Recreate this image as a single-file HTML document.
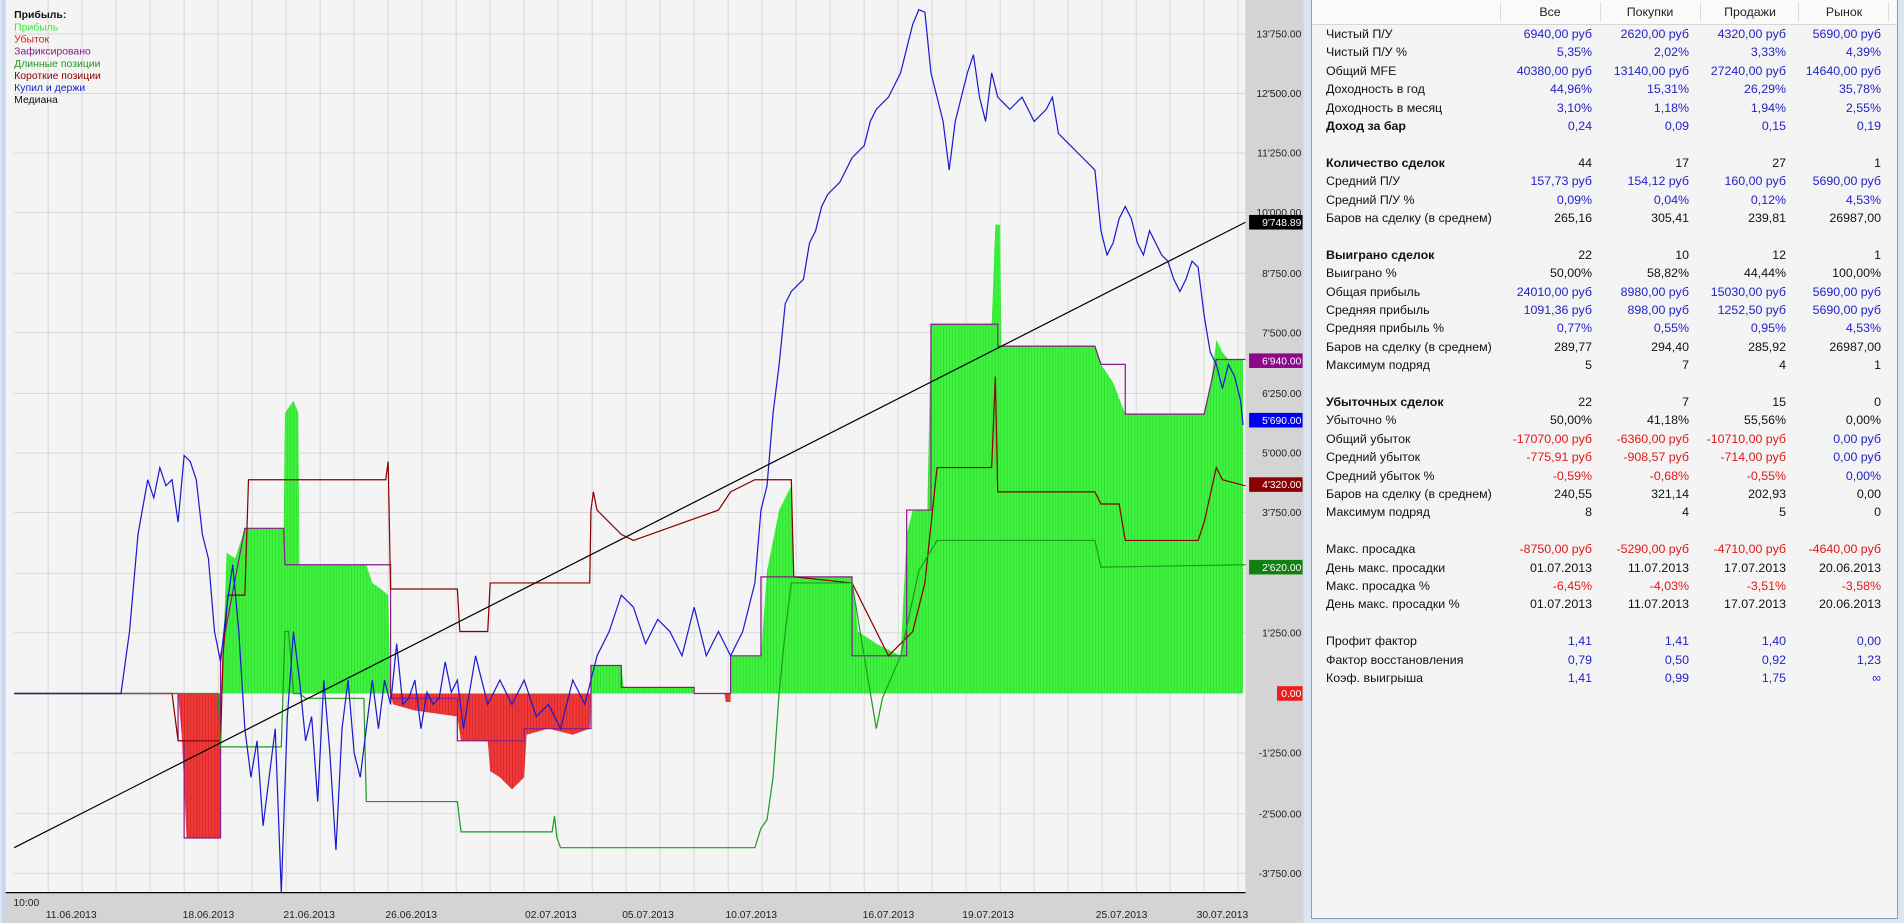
<!DOCTYPE html>
<html><head><meta charset="utf-8">
<style>
html,body{margin:0;padding:0;width:1904px;height:923px;overflow:hidden;background:#dbe6f4;font-family:"Liberation Sans","DejaVu Sans",sans-serif;}
#chart{position:absolute;left:2px;top:0;width:1302px;height:923px;}
#panel{position:absolute;left:1311px;top:0;width:585px;height:918px;background:#f4f4f4;border:1px solid #8c9cb4;border-top:none;font-size:12.4px;color:#111;}
.hdr{position:absolute;left:0;top:0;width:585px;height:24px;background:#fafafa;border-bottom:1px solid #d6d6d6;}
.hdr span{position:absolute;top:5px;width:100px;text-align:center;color:#222;}
.hdr i{position:absolute;top:2px;width:1px;height:20px;background:#dcdcdc;}
.r{position:absolute;left:0;width:585px;height:18px;line-height:18px;}
.r b,.r span{position:absolute;}
.r .l{left:14px;font-weight:normal;}
.r .bl{left:14px;font-weight:bold;}
.c1,.c2,.c3,.c4{text-align:right;width:140px;}
.c1{left:140px}.c2{left:237px}.c3{left:334px}.c4{left:429px}
.b{color:#2222c8}.d{color:#e01818}
</style></head><body>
<svg id="chart" viewBox="0 0 1072.2 760" preserveAspectRatio="none" xmlns="http://www.w3.org/2000/svg">
<defs>
<pattern id="gp" width="2.5" height="10" patternUnits="userSpaceOnUse"><rect width="2.5" height="10" fill="#3ff23f"/><rect width="0.5" height="10" fill="#2bd62b"/></pattern>
<pattern id="rp" width="2.5" height="10" patternUnits="userSpaceOnUse"><rect width="2.5" height="10" fill="#f03a3a"/><rect width="0.5" height="10" fill="#c81e1e"/></pattern>
</defs>
<rect x="0" y="0" width="1072" height="760" fill="#f4f4f4"/>
<rect x="0" y="0" width="3" height="760" fill="#c8d6ea"/>
<rect x="1024" y="0" width="48" height="735" fill="#d4d4d4"/>
<rect x="3" y="735" width="1069" height="25" fill="#d4d4d4"/>
<g stroke="#d8d8d8" stroke-width="0.8">
<line x1="10" x2="1024" y1="28" y2="28"/><line x1="10" x2="1024" y1="77" y2="77"/><line x1="10" x2="1024" y1="126" y2="126"/><line x1="10" x2="1024" y1="175" y2="175"/><line x1="10" x2="1024" y1="225" y2="225"/><line x1="10" x2="1024" y1="274" y2="274"/><line x1="10" x2="1024" y1="324" y2="324"/><line x1="10" x2="1024" y1="373" y2="373"/><line x1="10" x2="1024" y1="422" y2="422"/><line x1="10" x2="1024" y1="472" y2="472"/><line x1="10" x2="1024" y1="521" y2="521"/><line x1="10" x2="1024" y1="620" y2="620"/><line x1="10" x2="1024" y1="670" y2="670"/><line x1="10" x2="1024" y1="719" y2="719"/>
<line x1="38" x2="38" y1="0" y2="735"/><line x1="66" x2="66" y1="0" y2="735"/><line x1="94" x2="94" y1="0" y2="735"/><line x1="122" x2="122" y1="0" y2="735"/><line x1="150" x2="150" y1="0" y2="735"/><line x1="178" x2="178" y1="0" y2="735"/><line x1="206" x2="206" y1="0" y2="735"/><line x1="234" x2="234" y1="0" y2="735"/><line x1="262" x2="262" y1="0" y2="735"/><line x1="290" x2="290" y1="0" y2="735"/><line x1="318" x2="318" y1="0" y2="735"/><line x1="346" x2="346" y1="0" y2="735"/><line x1="374" x2="374" y1="0" y2="735"/><line x1="402" x2="402" y1="0" y2="735"/><line x1="430" x2="430" y1="0" y2="735"/><line x1="458" x2="458" y1="0" y2="735"/><line x1="486" x2="486" y1="0" y2="735"/><line x1="514" x2="514" y1="0" y2="735"/><line x1="542" x2="542" y1="0" y2="735"/><line x1="570" x2="570" y1="0" y2="735"/><line x1="598" x2="598" y1="0" y2="735"/><line x1="626" x2="626" y1="0" y2="735"/><line x1="654" x2="654" y1="0" y2="735"/><line x1="682" x2="682" y1="0" y2="735"/><line x1="710" x2="710" y1="0" y2="735"/><line x1="738" x2="738" y1="0" y2="735"/><line x1="766" x2="766" y1="0" y2="735"/><line x1="794" x2="794" y1="0" y2="735"/><line x1="822" x2="822" y1="0" y2="735"/><line x1="850" x2="850" y1="0" y2="735"/><line x1="878" x2="878" y1="0" y2="735"/><line x1="906" x2="906" y1="0" y2="735"/><line x1="934" x2="934" y1="0" y2="735"/><line x1="962" x2="962" y1="0" y2="735"/><line x1="990" x2="990" y1="0" y2="735"/><line x1="1018" x2="1018" y1="0" y2="735"/>
</g>
<path fill="url(#gp)" d="M180,571 L182,540 L185,455 L192,460 L200,435 L232,435 L233,340 L240,330 L244,340 L245,465 L300,465 L305,480 L312,485 L318,490 L320,571 Z
M485,571 L485,548 L510,548 L512,566 L570,566 L570,571 Z
M600,571 L600,540 L625,540 L630,470 L640,420 L650,400 L652,475 L700,475 L705,520 L720,530 L740,540 L745,440 L750,420 L762,420 L765,267 L815,267 L818,185 L822,185 L823,285 L900,285 L905,300 L915,315 L925,341 L990,341 L995,320 L1000,280 L1005,290 L1010,296 L1022,296 L1022,571 Z"/>
<path fill="url(#rp)" d="M145,571 L148,605 L152,690 L180,690 L180,571 Z
M320,571 L322,580 L340,585 L375,590 L378,610 L400,610 L402,635 L410,640 L420,650 L430,640 L432,605 L450,600 L470,605 L484,600 L485,571 Z
M595,571 L596,578 L600,578 L600,571 Z"/>
<polyline fill="none" stroke="#8a1a8a" stroke-width="1" points="10,571 145,571 145,610 150,610 150,690 180,690 180,540 200,435 232,435 233,465 320,465 320,575 375,575 375,610 430,610 430,600 485,600 485,548 510,548 510,566 570,566 570,571 600,571 600,540 625,540 625,475 700,475 700,540 745,540 745,420 765,420 765,267 820,267 820,285 900,285 905,300 925,300 925,341 990,341 1000,296 1024,296"/>
<polyline fill="none" stroke="#8b0000" stroke-width="1" points="10,571 140,571 145,610 180,610 182,540 186,490 200,490 203,395 316,395 318,380 320,485 375,485 377,520 400,520 402,480 430,480 432,480 484,480 485,420 487,405 490,420 510,440 520,445 590,420 600,405 620,395 650,395 652,475 700,480 730,540 750,520 760,480 770,385 815,385 818,310 820,405 900,405 905,415 920,415 925,445 985,445 990,430 1000,385 1005,395 1024,400"/>
<polyline fill="none" stroke="#1e9a1e" stroke-width="1" points="10,571 178,571 180,615 230,615 233,520 236,520 240,571 245,571 250,575 298,575 300,660 375,660 378,685 453,685 455,672 457,690 460,698 620,698 625,682 630,675 635,640 640,570 645,520 650,480 700,480 715,570 720,600 725,575 740,540 755,470 770,445 900,445 905,467 1024,465"/>
<polyline fill="none" stroke="#1a1ad0" stroke-width="1" points="10,571 98,571 105,520 112,440 120,395 125,410 130,385 135,400 140,395 145,430 150,375 155,380 160,395 165,440 170,460 175,520 180,545 185,500 190,465 195,520 200,600 205,640 210,610 215,680 220,640 225,600 230,735 235,590 240,520 245,560 250,610 255,590 260,660 265,560 270,620 275,700 280,600 285,560 290,620 295,640 300,600 305,560 310,600 315,560 320,580 325,530 330,580 335,575 340,560 345,600 350,570 355,580 360,575 365,545 370,570 375,560 380,600 390,540 400,580 410,560 420,580 430,560 440,590 450,580 460,600 470,560 480,580 490,540 500,520 510,490 520,500 530,530 540,510 550,520 560,540 570,500 580,540 590,520 600,540 610,520 615,500 620,480 625,420 630,400 635,340 640,300 645,250 650,240 660,230 665,200 670,190 675,170 680,160 690,150 700,130 710,120 715,100 720,90 730,80 740,60 745,40 750,20 755,8 760,10 765,60 770,80 775,100 780,140 785,100 790,80 795,60 800,45 805,80 810,100 815,60 820,80 830,90 840,80 850,100 860,90 865,80 870,110 880,120 890,130 900,140 905,190 910,210 915,200 920,180 925,170 930,180 935,200 940,210 945,190 950,200 955,210 960,215 965,230 970,240 975,230 980,215 985,220 990,260 995,290 1000,300 1005,320 1010,300 1015,310 1020,330 1022,350"/>
<line x1="10" y1="698" x2="1024" y2="183" stroke="#000" stroke-width="1"/>
<line x1="3" y1="735" x2="1024" y2="735" stroke="#000" stroke-width="1"/>
<g font-family="Liberation Sans, DejaVu Sans, sans-serif" font-size="8.5" fill="#222" text-anchor="end">
<text x="1070" y="31">13'750.00</text><text x="1070" y="80">12'500.00</text><text x="1070" y="129">11'250.00</text><text x="1070" y="178">10'000.00</text><text x="1070" y="228">8'750.00</text><text x="1070" y="277">7'500.00</text><text x="1070" y="327">6'250.00</text><text x="1070" y="376">5'000.00</text><text x="1070" y="425">3'750.00</text><text x="1070" y="524">1'250.00</text><text x="1070" y="623">-1'250.00</text><text x="1070" y="673">-2'500.00</text><text x="1070" y="722">-3'750.00</text>
</g>
<rect x="1027" y="177" width="44" height="12" fill="#000"/>
<rect x="1027" y="291" width="44" height="12" fill="#8a0a8a"/>
<rect x="1027" y="340" width="44" height="12" fill="#0000f0"/>
<rect x="1027" y="393" width="44" height="12" fill="#8b0000"/>
<rect x="1027" y="461" width="44" height="12" fill="#108010"/>
<rect x="1050" y="565" width="21" height="12" fill="#f01c1c"/>
<g font-family="Liberation Sans, DejaVu Sans, sans-serif" font-size="8.5" fill="#fff" text-anchor="end">
<text x="1070" y="186">9'748.89</text><text x="1070" y="300">6'940.00</text><text x="1070" y="349">5'690.00</text><text x="1070" y="402">4'320.00</text><text x="1070" y="470">2'620.00</text><text x="1070" y="574">0.00</text>
</g>
<g font-family="Liberation Sans, DejaVu Sans, sans-serif" font-size="8.5" fill="#222" text-anchor="middle">
<text x="20" y="746">10:00</text>
<text x="57" y="756">11.06.2013</text><text x="170" y="756">18.06.2013</text><text x="253" y="756">21.06.2013</text><text x="337" y="756">26.06.2013</text><text x="452" y="756">02.07.2013</text><text x="532" y="756">05.07.2013</text><text x="617" y="756">10.07.2013</text><text x="730" y="756">16.07.2013</text><text x="812" y="756">19.07.2013</text><text x="922" y="756">25.07.2013</text><text x="1005" y="756">30.07.2013</text>
</g>
<g font-family="Liberation Sans, DejaVu Sans, sans-serif" font-size="8.6">
<text x="10" y="15" font-weight="bold" fill="#111">Прибыль:</text>
<text x="10" y="25" fill="#33ee33">Прибыль</text>
<text x="10" y="35" fill="#e01818">Убыток</text>
<text x="10" y="45" fill="#8a1a8a">Зафиксировано</text>
<text x="10" y="55" fill="#1e9a1e">Длинные позиции</text>
<text x="10" y="65" fill="#8b0000">Короткие позиции</text>
<text x="10" y="75" fill="#1a1ad0">Купил и держи</text>
<text x="10" y="85" fill="#111">Медиана</text>
</g>
</svg>

<div id="panel">
<div class="hdr">
<i style="left:188px"></i><i style="left:288px"></i><i style="left:388px"></i><i style="left:486px"></i><i style="left:576px"></i>
<span style="left:188px">Все</span><span style="left:288px">Покупки</span><span style="left:388px">Продажи</span><span style="left:482px">Рынок</span>
</div>
<div class="r" style="top:25px"><span class="l">Чистый П/У</span><span class="c1 b">6940,00 руб</span><span class="c2 b">2620,00 руб</span><span class="c3 b">4320,00 руб</span><span class="c4 b">5690,00 руб</span></div>
<div class="r" style="top:43.4px"><span class="l">Чистый П/У %</span><span class="c1 b">5,35%</span><span class="c2 b">2,02%</span><span class="c3 b">3,33%</span><span class="c4 b">4,39%</span></div>
<div class="r" style="top:61.8px"><span class="l">Общий MFE</span><span class="c1 b">40380,00 руб</span><span class="c2 b">13140,00 руб</span><span class="c3 b">27240,00 руб</span><span class="c4 b">14640,00 руб</span></div>
<div class="r" style="top:80.2px"><span class="l">Доходность в год</span><span class="c1 b">44,96%</span><span class="c2 b">15,31%</span><span class="c3 b">26,29%</span><span class="c4 b">35,78%</span></div>
<div class="r" style="top:98.6px"><span class="l">Доходность в месяц</span><span class="c1 b">3,10%</span><span class="c2 b">1,18%</span><span class="c3 b">1,94%</span><span class="c4 b">2,55%</span></div>
<div class="r" style="top:117px"><b class="bl">Доход за бар</b><span class="c1 b">0,24</span><span class="c2 b">0,09</span><span class="c3 b">0,15</span><span class="c4 b">0,19</span></div>

<div class="r" style="top:153.8px"><b class="bl">Количество сделок</b><span class="c1">44</span><span class="c2">17</span><span class="c3">27</span><span class="c4">1</span></div>
<div class="r" style="top:172.2px"><span class="l">Средний П/У</span><span class="c1 b">157,73 руб</span><span class="c2 b">154,12 руб</span><span class="c3 b">160,00 руб</span><span class="c4 b">5690,00 руб</span></div>
<div class="r" style="top:190.6px"><span class="l">Средний П/У %</span><span class="c1 b">0,09%</span><span class="c2 b">0,04%</span><span class="c3 b">0,12%</span><span class="c4 b">4,53%</span></div>
<div class="r" style="top:209px"><span class="l">Баров на сделку (в среднем)</span><span class="c1">265,16</span><span class="c2">305,41</span><span class="c3">239,81</span><span class="c4">26987,00</span></div>

<div class="r" style="top:245.8px"><b class="bl">Выиграно сделок</b><span class="c1">22</span><span class="c2">10</span><span class="c3">12</span><span class="c4">1</span></div>
<div class="r" style="top:264.2px"><span class="l">Выиграно %</span><span class="c1">50,00%</span><span class="c2">58,82%</span><span class="c3">44,44%</span><span class="c4">100,00%</span></div>
<div class="r" style="top:282.6px"><span class="l">Общая прибыль</span><span class="c1 b">24010,00 руб</span><span class="c2 b">8980,00 руб</span><span class="c3 b">15030,00 руб</span><span class="c4 b">5690,00 руб</span></div>
<div class="r" style="top:301px"><span class="l">Средняя прибыль</span><span class="c1 b">1091,36 руб</span><span class="c2 b">898,00 руб</span><span class="c3 b">1252,50 руб</span><span class="c4 b">5690,00 руб</span></div>
<div class="r" style="top:319.4px"><span class="l">Средняя прибыль %</span><span class="c1 b">0,77%</span><span class="c2 b">0,55%</span><span class="c3 b">0,95%</span><span class="c4 b">4,53%</span></div>
<div class="r" style="top:337.8px"><span class="l">Баров на сделку (в среднем)</span><span class="c1">289,77</span><span class="c2">294,40</span><span class="c3">285,92</span><span class="c4">26987,00</span></div>
<div class="r" style="top:356.2px"><span class="l">Максимум подряд</span><span class="c1">5</span><span class="c2">7</span><span class="c3">4</span><span class="c4">1</span></div>

<div class="r" style="top:393px"><b class="bl">Убыточных сделок</b><span class="c1">22</span><span class="c2">7</span><span class="c3">15</span><span class="c4">0</span></div>
<div class="r" style="top:411.4px"><span class="l">Убыточно %</span><span class="c1">50,00%</span><span class="c2">41,18%</span><span class="c3">55,56%</span><span class="c4">0,00%</span></div>
<div class="r" style="top:429.8px"><span class="l">Общий убыток</span><span class="c1 d">-17070,00 руб</span><span class="c2 d">-6360,00 руб</span><span class="c3 d">-10710,00 руб</span><span class="c4 b">0,00 руб</span></div>
<div class="r" style="top:448.2px"><span class="l">Средний убыток</span><span class="c1 d">-775,91 руб</span><span class="c2 d">-908,57 руб</span><span class="c3 d">-714,00 руб</span><span class="c4 b">0,00 руб</span></div>
<div class="r" style="top:466.6px"><span class="l">Средний убыток %</span><span class="c1 d">-0,59%</span><span class="c2 d">-0,68%</span><span class="c3 d">-0,55%</span><span class="c4 b">0,00%</span></div>
<div class="r" style="top:485px"><span class="l">Баров на сделку (в среднем)</span><span class="c1">240,55</span><span class="c2">321,14</span><span class="c3">202,93</span><span class="c4">0,00</span></div>
<div class="r" style="top:503.4px"><span class="l">Максимум подряд</span><span class="c1">8</span><span class="c2">4</span><span class="c3">5</span><span class="c4">0</span></div>

<div class="r" style="top:540.2px"><span class="l">Макс. просадка</span><span class="c1 d">-8750,00 руб</span><span class="c2 d">-5290,00 руб</span><span class="c3 d">-4710,00 руб</span><span class="c4 d">-4640,00 руб</span></div>
<div class="r" style="top:558.6px"><span class="l">День макс. просадки</span><span class="c1">01.07.2013</span><span class="c2">11.07.2013</span><span class="c3">17.07.2013</span><span class="c4">20.06.2013</span></div>
<div class="r" style="top:577px"><span class="l">Макс. просадка %</span><span class="c1 d">-6,45%</span><span class="c2 d">-4,03%</span><span class="c3 d">-3,51%</span><span class="c4 d">-3,58%</span></div>
<div class="r" style="top:595.4px"><span class="l">День макс. просадки %</span><span class="c1">01.07.2013</span><span class="c2">11.07.2013</span><span class="c3">17.07.2013</span><span class="c4">20.06.2013</span></div>

<div class="r" style="top:632.2px"><span class="l">Профит фактор</span><span class="c1 b">1,41</span><span class="c2 b">1,41</span><span class="c3 b">1,40</span><span class="c4 b">0,00</span></div>
<div class="r" style="top:650.6px"><span class="l">Фактор восстановления</span><span class="c1 b">0,79</span><span class="c2 b">0,50</span><span class="c3 b">0,92</span><span class="c4 b">1,23</span></div>
<div class="r" style="top:669px"><span class="l">Коэф. выигрыша</span><span class="c1 b">1,41</span><span class="c2 b">0,99</span><span class="c3 b">1,75</span><span class="c4 b">∞</span></div>
</div>
</body></html>
